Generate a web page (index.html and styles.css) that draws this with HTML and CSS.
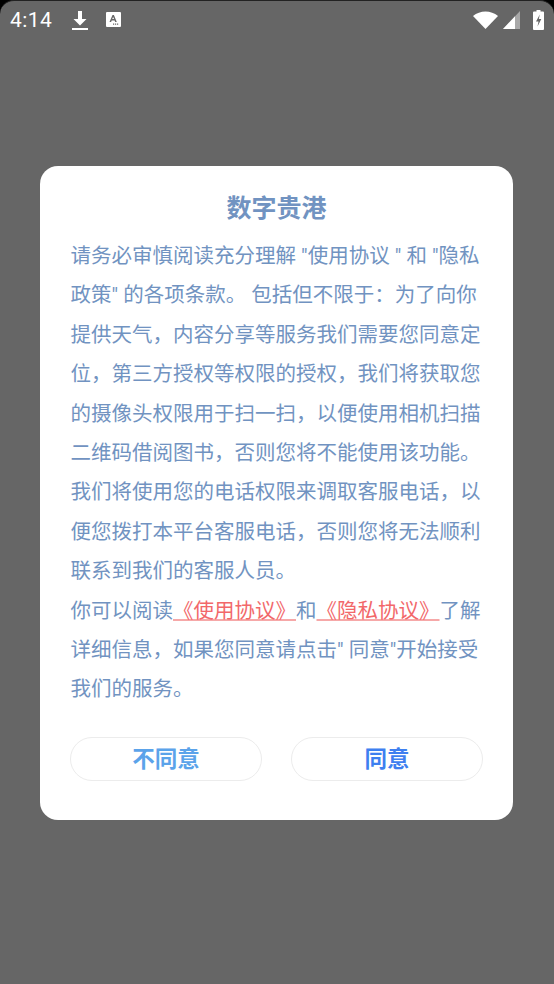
FILE: index.html
```html
<!DOCTYPE html>
<html lang="zh-CN">
<head>
<meta charset="utf-8">
<title>数字贵港</title>
<link rel="stylesheet" href="styles.css">
</head>
<body>
<div class="screen">
  <header class="status">
    <div class="status-left">
      <span class="time">4:14</span>
      <svg class="ico-dl" viewBox="0 0 16 20" width="16" height="20"><path d="M6 1h4v8h4.500L8 15.500 1.500 9H6z" fill="#fff"/><rect x="0" y="18" width="16" height="2" fill="#fff"/></svg>
      <svg class="ico-a" viewBox="0 0 15 15" width="15" height="15"><path fill-rule="evenodd" fill="#fff" d="M1 0h13a1 1 0 0 1 1 1v13a1 1 0 0 1-1 1H1a1 1 0 0 1-1-1V1a1 1 0 0 1 1-1zM6.500 3 3.500 10h1.600l.6-1.600h2.900l.6 1.600h1.600L7.900 3zM7.100 4.900l1 2.200H6.200zM9 11.500h1.200v1.200H9zM11 11.500h1.200v1.200H11zM7 11.500h1.200v1.200H7z"/></svg>
    </div>
    <div class="status-right">
      <svg viewBox="0 0 25 18" width="25" height="18"><path d="M0 5C3.500 2 8 .5 12.500.5S21.500 2 25 5L12.500 18z" fill="#fff"/></svg>
      <svg viewBox="0 0 17 18" width="17" height="18"><path d="M17 0v18H0z" fill="#a8a8a8"/><path d="M12 5.300V18H0z" fill="#fff"/></svg>
      <svg class="ico-bat" viewBox="0 0 11 20" width="11" height="20"><path fill-rule="evenodd" fill="#fff" d="M3.500 0h4v1.500H10a1 1 0 0 1 1 1V19a1 1 0 0 1-1 1H1a1 1 0 0 1-1-1V2.500a1 1 0 0 1 1-1h2.500zM6.800 4.500 3 11.500h2.500L4.500 16.500 8.300 9H5.800z"/></svg>
    </div>
  </header>
  <main class="overlay">
    <section class="dialog">
      <h1 class="title">数字贵港</h1>
      <p class="body">请务必审慎阅读充分理解 "使用协议 " 和 "隐私<br>政策" 的各项条款。 包括但不限于：为了向你<br>提供天气，内容分享等服务我们需要您同意定<br>位，第三方授权等权限的授权，我们将获取您<br>的摄像头权限用于扫一扫，以便使用相机扫描<br>二维码借阅图书，否则您将不能使用该功能。<br>我们将使用您的电话权限来调取客服电话，以<br>便您拨打本平台客服电话，否则您将无法顺利<br>联系到我们的客服人员。<br>你可以阅读<a class="link">《使用协议》</a>和<a class="link">《隐私协议》</a>了解<br>详细信息，如果您同意请点击" 同意"开始接受<br>我们的服务。</p>
      <div class="actions">
        <button class="btn btn-no">不同意</button>
        <button class="btn btn-yes">同意</button>
      </div>
    </section>
  </main>
</div>
</body>
</html>
```
FILE: styles.css
```css
html, body {
  margin: 0;
  padding: 0;
  background: #000;
}
.screen {
  width: 554px;
  height: 984px;
  background: #666;
  border-radius: 14px 14px 0 0;
  border-top: 1px solid #222;
  box-sizing: border-box;
  font-family: "Roboto", "Noto Sans CJK SC", sans-serif;
  overflow: hidden;
  display: flex;
  flex-direction: column;
}
.status {
  height: 39px;
  flex: none;
  display: flex;
  justify-content: space-between;
  align-items: center;
  padding: 0 10px 2px 10px;
  box-sizing: border-box;
}
.status-left, .status-right {
  display: flex;
  align-items: center;
}
.time {
  color: #fff;
  font-size: 21px;
  letter-spacing: 0.4px;
  width: 62px;
}
.ico-a {
  margin-left: 18px;
}
.status-right svg + svg {
  margin-left: 5px;
}
.status-right .ico-bat {
  margin-left: 13px;
}
.overlay {
  flex: 1;
  padding: 126px 41px 0 40px;
}
.dialog {
  height: 654px;
  box-sizing: border-box;
  background: #fff;
  border-radius: 18px;
  padding: 27px 30px 0;
}
.title {
  margin: 0;
  text-align: center;
  color: #7193c1;
  font-size: 25px;
  line-height: 32px;
  font-weight: 700;
}
.body {
  margin: 12px 0 0;
  padding-left: 0.500px;
  color: #7193c1;
  font-size: 20.500px;
  line-height: 39.400px;
  white-space: nowrap;
}
.link {
  color: #f2686a;
  text-decoration: underline;
  text-decoration-color: #f6a8a8;
  text-decoration-thickness: 1.500px;
}
.actions {
  margin-top: 27px;
  display: flex;
  justify-content: space-between;
}
.btn {
  width: 192px;
  height: 44px;
  padding: 0 0 3px;
  border: 1px solid #ececec;
  border-radius: 22px;
  background: #fff;
  font-family: inherit;
  font-size: 22.500px;
  font-weight: 700;
}
.btn-no {
  color: #5ba3ea;
}
.btn-yes {
  color: #3e7ff0;
}
```
